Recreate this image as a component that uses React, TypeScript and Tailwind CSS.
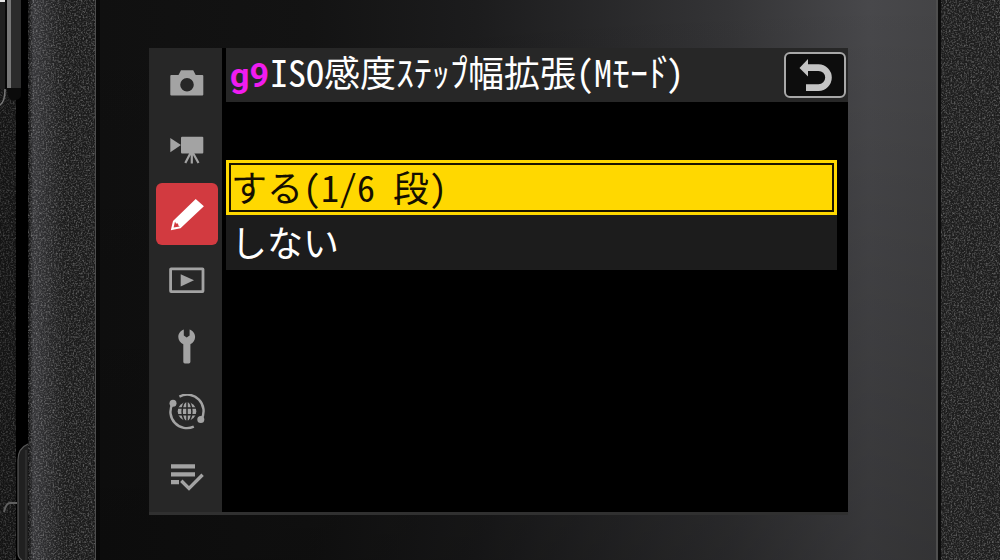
import { useState } from 'react';
import type { ReactNode } from 'react';

const icons: Record<string, ReactNode> = {
    photo: (
        <path
            fillRule="evenodd"
            d="M2.3 11H9.5L12 6.2H24.2L26.7 11H33.3a1 1 0 0 1 1 1V30.6a1 1 0 0 1-1 1H2.3a1 1 0 0 1-1-1V12a1 1 0 0 1 1-1ZM18 13.9a6.8 6.8 0 1 0 0 13.6a6.8 6.8 0 0 0 0-13.6Z"
        />
    ),
    video: (
        <>
            <path d="M1.3 8L12 15L1.3 22.3Z" />
            <rect x="12" y="6.7" width="22.3" height="16.8" rx="1" />
            <path d="M21.5 23L16.3 33M22.8 23V33.5M24 23L29.5 33" stroke="currentColor" strokeWidth="2.2" fill="none" />
        </>
    ),
    custom: (
        <path fillRule="evenodd" d="M26.7 3L34.9 10.3L11.5 32.3L1.8 34.2L4 25ZM6 25.6L4.6 31.4L10.8 30.4L9.4 29.4L9 27.6L7 27.4Z" />
    ),
    playback: (
        <>
            <rect x="1.6" y="6.8" width="32.4" height="22.8" rx="0.5" fill="none" stroke="currentColor" strokeWidth="2.8" />
            <path d="M11.7 12.2V24.4L25 18.3Z" />
        </>
    ),
    setup: (
        <path d="M14.8 1.4V7.6L17.7 9.6L20.6 7.6V1.4C24 2.6 26.1 5.6 26.1 8.9C26.1 12 24.2 14.9 21.4 16.3V33.8a1.6 1.6 0 0 1-1.6 1.6H15.9a1.6 1.6 0 0 1-1.6-1.6V16.3C11.3 14.9 9.3 12 9.3 8.9C9.3 5.6 11.4 2.6 14.8 1.4Z" />
    ),
    network: (
        <>
            <circle cx="18" cy="17.4" r="9.3" />
            <g fill="none" stroke="#272727" strokeWidth="1.5">
                <path d="M18 7.5V27.5M8 14H28M8 20.8H28" />
                <ellipse cx="18" cy="17.4" rx="4.9" ry="10.4" />
            </g>
            <g fill="none" stroke="currentColor" strokeWidth="2.4">
                <path d="M10.4 2.6A16.4 16.4 0 0 1 32.4 25.2" />
                <path d="M3.5 9.8A16.4 16.4 0 0 0 24.8 32.6" />
            </g>
            <circle cx="4" cy="9.2" r="3.5" />
            <circle cx="31.8" cy="25.6" r="3.5" />
        </>
    ),
    myMenu: (
        <>
            <path d="M2 4.3H26V8.6H2ZM2 12.2H26V16.5H2ZM2 20.1H10V24.2H2Z" />
            <path d="M12.3 20.8L20 28.4L33.6 14.8" fill="none" stroke="currentColor" strokeWidth="3.4" />
        </>
    ),
};

const tabs = [
    { id: 'photo', label: '静止画撮影メニュー' },
    { id: 'video', label: '動画撮影メニュー' },
    { id: 'custom', label: 'カスタムメニュー' },
    { id: 'playback', label: '再生メニュー' },
    { id: 'setup', label: 'セットアップメニュー' },
    { id: 'network', label: 'ネットワークメニュー' },
    { id: 'myMenu', label: 'マイメニュー' },
];

const options = ['する(1/6 段)', 'しない'];

// Grainy leatherette of the camera body
const Grain = ({ id }: { id: string }) => (
    <svg className="absolute inset-0 w-full h-full" aria-hidden="true">
        <filter id={id} x="0" y="0" width="100%" height="100%">
            <feTurbulence type="fractalNoise" baseFrequency="0.6" numOctaves="3" seed="4" />
            <feColorMatrix values="0 0 0 0 1  0 0 0 0 1  0 0 0 0 1  0.7 0 0 0 -0.3" />
        </filter>
        <rect width="100%" height="100%" filter={`url(#${id})`} />
    </svg>
);

// Hinge parts next to the monitor
const Hinge = () => (
    <>
        <svg className="absolute top-0 left-0 w-7 h-28" viewBox="0 0 28 112" aria-hidden="true">
            <rect width="5" height="89" fill="#202020" />
            <rect width="5" height="2" fill="#e5e5e5" />
            <rect x="5" width="2" height="89" fill="#080808" />
            <rect x="7" width="4" height="89" fill="#777" />
            <rect x="11" width="10" height="92" fill="#2c2c2c" />
            <path d="M7 88H21V96Q20 100 14 100H11Q7 97 7 88Z" fill="#0b0b0b" />
            <path d="M0 105Q5 102 5 89" fill="none" stroke="#777" strokeWidth="1.5" />
        </svg>
        <svg className="absolute bottom-0 left-0 w-7 h-30" viewBox="0 0 28 120" aria-hidden="true">
            <path d="M28 4Q18 8 18 20V112Q18 118 22 120H28Z" fill="#202020" />
            <path d="M28 4Q18 8 18 20V112Q18 118 22 120" fill="none" stroke="#555" strokeWidth="1.2" />
            <path d="M26 10V120" stroke="#3a3a3a" />
            <path d="M4 72Q6 63 10 63H17" fill="none" stroke="#606060" strokeWidth="2" />
        </svg>
    </>
);

const App = () => {
    const [activeTab, setActiveTab] = useState('custom');
    const [selected, setSelected] = useState(0);

    return (
        <div
            lang="ja"
            className="min-h-screen flex bg-[#101010] font-['Noto_Sans_CJK_JP',sans-serif] [font-feature-settings:'hwid']"
        >
            {/* Left side of the body */}
            <div className="flex w-24 shrink-0 border-r border-[#4c4c4c]">
                <div className="relative w-7 bg-linear-to-r from-[#141414] from-55% to-black to-60%">
                    <div className="absolute inset-y-0 left-0 w-4 opacity-70">
                        <Grain id="grain-hinge" />
                    </div>
                    <Hinge />
                </div>
                <div className="relative flex-1 bg-linear-to-r from-[#101010] via-[#38383b] via-8% to-[#1c1c1c] to-55%">
                    <Grain id="grain-left" />
                </div>
            </div>

            {/* Monitor */}
            <div className="flex-1 flex min-w-0 pt-12 pr-[88px] pb-11 pl-[49px] border-l-4 border-r-2 border-l-[#080808] border-r-[#4e4e4e] bg-[linear-gradient(to_bottom,#00000000,#00000040),linear-gradient(to_right,#101010,#131313_25%,#1c1c1d_45%,#343436_75%,#48484b_92%,#444446)]">
                <div className="flex flex-1 min-w-0 self-start border-b-3 border-[#303030] bg-black">
                    <nav className="flex flex-col shrink-0 items-center gap-1 w-[73px] py-[3px] pl-0.5 bg-[#272727]">
                        {tabs.map((tab) => (
                            <button
                                key={tab.id}
                                aria-label={tab.label}
                                onClick={() => setActiveTab(tab.id)}
                                className={`
                                    flex items-center justify-center w-[62px] h-[62px] rounded-md
                                    ${activeTab === tab.id ? 'bg-[#d23a40] text-white' : 'text-[#a3a3a3]'}
                                `}
                            >
                                <svg className="w-9 h-9" viewBox="0 0 36 36" fill="currentColor" aria-hidden="true">
                                    {icons[tab.id]}
                                </svg>
                            </button>
                        ))}
                    </nav>

                    <main className="flex-1 min-w-0 pl-1 bg-black text-white text-[36px] leading-[46px]">
                        <header className="flex items-center justify-between h-[54px] pl-1 pr-0.5 bg-[#272727]">
                            <h1 className="flex items-baseline pb-1 whitespace-nowrap">
                                <span className="w-10 shrink-0 text-[34px] font-bold text-[#f01cf0] font-[Roboto,sans-serif]">g9</span>
                                <span>
                                    ISO感度ｽﾃｯﾌ<span className="-mx-[9px]">ﾟ</span>幅拡張(Mﾓｰﾄ<span className="-mx-[9px]">ﾞ</span>)
                                </span>
                            </h1>
                            <button
                                aria-label="戻る"
                                className="shrink-0 w-[62px] h-[46px] rounded-md border-2 border-[#a8a8a8] bg-[#0d0d0d] text-[#c4c4c4]"
                            >
                                <svg viewBox="0 0 58 42" fill="currentColor" aria-hidden="true">
                                    <path d="M13.5 14L22 5V22.6Z" />
                                    <path d="M21 13.6H32.5a10 10 0 0 1 0 20H20" fill="none" stroke="currentColor" strokeWidth="6.6" />
                                </svg>
                            </button>
                        </header>

                        <ul className="mt-[58px] mr-[11px]">
                            {options.map((option, i) => (
                                <li key={option}>
                                    <button
                                        aria-pressed={selected === i}
                                        onClick={() => setSelected(i)}
                                        className={`
                                            flex w-full h-[55px] p-[3px]
                                            ${selected === i ? 'bg-[#ffd800] text-[#150f00]' : 'bg-[#1c1c1c] text-white'}
                                        `}
                                    >
                                        <span
                                            className={`
                                                flex flex-1 items-center h-full pb-1 border-2
                                                ${selected === i ? 'border-[#1c1500]' : 'border-transparent'}
                                            `}
                                        >
                                            {option}
                                        </span>
                                    </button>
                                </li>
                            ))}
                        </ul>
                    </main>
                </div>
            </div>

            {/* Right side of the body */}
            <div className="relative w-[62px] shrink-0 border-l-3 border-[#0c0c0c] bg-[#1e1e1e]">
                <Grain id="grain-right" />
            </div>
        </div>
    );
};

export default App;
